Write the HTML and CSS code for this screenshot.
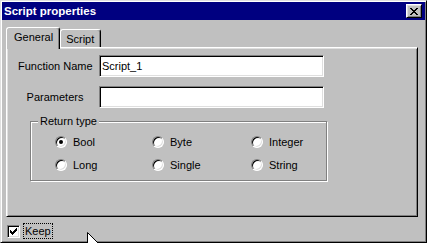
FILE: index.html
```html
<!DOCTYPE html>
<html lang="en">
<head>
  <meta charset="UTF-8">
  <meta name="viewport" content="width=device-width, initial-scale=1.0">
  <title>Script properties</title>
  <link rel="stylesheet" href="styles.css">
</head>
<body>

  <div class="window">
    <div class="titlebar">
      <span class="title">Script properties</span>
      <button class="close" aria-label="Close">
        <svg width="8" height="7" viewBox="0 0 8 7">
          <path d="M0 0h2v1h-2z M6 0h2v1h-2z M1 1h2v1h-2z M5 1h2v1h-2z M2 2h4v1h-4z M3 3h2v1h-2z M2 4h4v1h-4z M1 5h2v1h-2z M5 5h2v1h-2z M0 6h2v1h-2z M6 6h2v1h-2z" fill="#000"/>
        </svg>
      </button>
    </div>

    <div class="content">
      <div class="tabs">
        <div class="tab active">General</div>
        <div class="tab">Script</div>
      </div>

      <div class="panel">
        <div class="field">
          <label class="field-label" for="fname">Function Name</label>
          <input class="edit" type="text" id="fname" value="Script_1">
        </div>
        <div class="field">
          <label class="field-label" for="params">Parameters</label>
          <input class="edit" type="text" id="params">
        </div>

        <div class="group">
          <span class="group-title">Return type</span>
          <div class="radios">
            <label class="radio"><span class="dot checked"></span>Bool</label>
            <label class="radio"><span class="dot"></span>Byte</label>
            <label class="radio"><span class="dot"></span>Integer</label>
            <label class="radio"><span class="dot"></span>Long</label>
            <label class="radio"><span class="dot"></span>Single</label>
            <label class="radio"><span class="dot"></span>String</label>
          </div>
        </div>
      </div>

      <div class="footer">
        <label class="check">
          <span class="box">
            <svg width="7" height="7" viewBox="0 0 7 7">
              <path d="M6 0h1v3h-1z M5 1h1v3h-1z M4 2h1v3h-1z M0 2h1v3h-1z M1 3h1v3h-1z M2 4h1v3h-1z M3 3h1v3h-1z" fill="#000"/>
            </svg>
          </span>
          <span class="focus">Keep</span>
        </label>
      </div>
    </div>
  </div>

  <svg class="cursor" width="12" height="19" viewBox="0 0 12 19">
    <path d="M0.5 0.5 L0.5 16.5 L4.5 12.5 L7.5 18.5 L9.5 17.5 L6.5 11.5 L11.5 11.5 Z" fill="#fff" stroke="#000" stroke-width="1"/>
  </svg>

</body>
</html>
```

FILE: styles.css
```css
:root {
  --face: #c0c0c0;
  --light: #dfdfdf;
  --shadow: #808080;
  --title: #000080;
}

html, body {
  overflow: hidden;
}

body {
  margin: 0;
  padding: 0;
  font-family: 'Liberation Sans', Arial, sans-serif;
  font-size: 11px;
  color: #000;
  background-color: var(--face);
}

.window {
  width: 427px;
  height: 243px;
  box-sizing: border-box;
  padding: 1px;
  background-color: var(--face);
  border: 1px solid;
  border-color: var(--light) #000 #000 var(--light);
  box-shadow: inset 1px 1px #fff, inset -1px -1px var(--shadow);
}

.titlebar {
  height: 18px;
  background-color: var(--title);
  color: #fff;
  display: flex;
  align-items: center;
  justify-content: space-between;
  padding-left: 2px;
}

.title {
  font-weight: bold;
  font-size: 11.5px;
}

.close {
  width: 16px;
  height: 14px;
  margin-right: 3px;
  padding: 0;
  display: flex;
  align-items: center;
  justify-content: center;
  background-color: var(--face);
  border: 1px solid;
  border-color: #fff #000 #000 #fff;
  box-shadow: inset 1px 1px var(--light), inset -1px -1px var(--shadow);
}

.content {
  padding: 7px 7px 0 4px;
}

/* tabs */
.tabs {
  display: flex;
  align-items: flex-end;
  height: 20px;
}

.tab {
  position: relative;
  height: 18px;
  box-sizing: border-box;
  padding: 3px 6px 0 5px;
  background-color: var(--face);
  border: 1px solid;
  border-bottom: none;
  border-color: #fff #000 transparent #fff;
  border-radius: 3px 3px 0 0;
  box-shadow: inset -1px 0 var(--shadow);
}

.tab.active {
  height: 22px;
  margin-bottom: -2px;
  padding: 3px 6px 0 7px;
  z-index: 1;
}

.panel {
  width: 412px;
  height: 170px;
  box-sizing: border-box;
  padding: 7px 0 0 11px;
  border: 1px solid;
  border-color: #fff #000 #000 #fff;
  box-shadow: inset 1px 1px var(--light), inset -1px -1px var(--shadow);
}

/* fields */
.field {
  display: flex;
  align-items: center;
  height: 22px;
}

.field + .field {
  margin-top: 9px;
}

.field-label {
  width: 74px;
  margin-right: 7px;
  text-align: center;
  white-space: nowrap;
}

.edit {
  width: 225px;
  height: 22px;
  box-sizing: border-box;
  padding: 0 2px;
  margin: 0;
  font-family: inherit;
  font-size: 11px;
  color: #000;
  background-color: #fff;
  border: 1px solid;
  border-color: var(--shadow) #fff #fff var(--shadow);
  box-shadow: inset 1px 1px #000, inset -1px -1px var(--light);
  outline: none;
}

/* group box */
.group {
  position: relative;
  width: 297px;
  height: 60px;
  box-sizing: border-box;
  margin: 13px 0 0 12px;
  padding: 12px 0 0 24px;
  border: 1px solid var(--shadow);
  box-shadow: inset 1px 1px #fff, 1px 1px #fff;
}

.group-title {
  position: absolute;
  top: -8px;
  left: 7px;
  padding: 0 2px;
  line-height: 14px;
  background-color: var(--face);
}

.radios {
  display: grid;
  grid-template-columns: 97px 99px 1fr;
  row-gap: 8px;
}

.radio {
  display: flex;
  align-items: center;
  gap: 6px;
  height: 15px;
}

.dot {
  width: 12px;
  height: 12px;
  box-sizing: border-box;
  border-radius: 50%;
  background-color: #fff;
  border: 1px solid;
  border-color: var(--shadow) #fff #fff var(--shadow);
  box-shadow: inset 1px 1px #000, inset -1px -1px var(--light);
  display: flex;
  align-items: center;
  justify-content: center;
}

.dot.checked::after {
  content: "";
  width: 4px;
  height: 4px;
  border-radius: 50%;
  background-color: #000;
}

/* footer */
.footer {
  margin-top: 6px;
  padding-left: 1px;
}

.check {
  display: flex;
  align-items: center;
  gap: 3px;
}

.box {
  width: 13px;
  height: 13px;
  box-sizing: border-box;
  background-color: #fff;
  border: 1px solid;
  border-color: var(--shadow) #fff #fff var(--shadow);
  box-shadow: inset 1px 1px #000, inset -1px -1px var(--light);
  display: flex;
  align-items: center;
  justify-content: center;
}

.focus {
  padding: 0 1px;
  line-height: 14px;
  border: 1px dotted #000;
}

.cursor {
  position: absolute;
  left: 87px;
  top: 232px;
}
```
